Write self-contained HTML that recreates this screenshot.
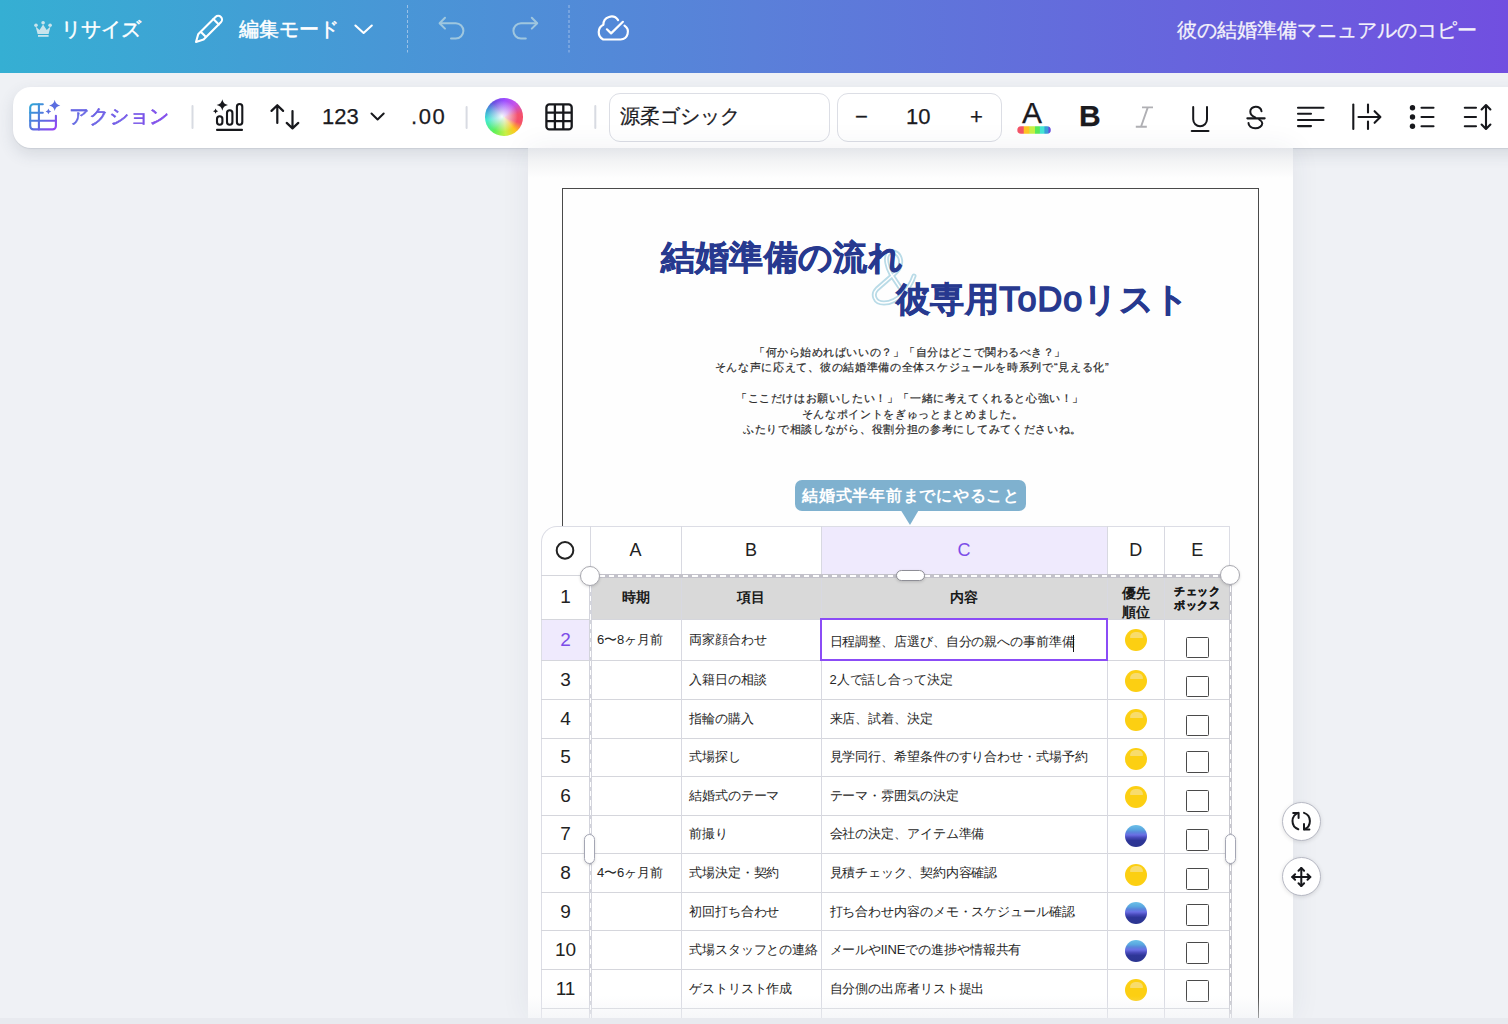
<!DOCTYPE html>
<html><head><meta charset="utf-8">
<style>
*{box-sizing:border-box;margin:0;padding:0}
html,body{width:1508px;height:1024px;overflow:hidden;background:#eff1f5;font-family:"Liberation Sans",sans-serif;color:#1a1a1a}
.a{position:absolute}
svg{position:absolute;overflow:visible}
#topbar{left:0;top:0;width:1508px;height:73px;background:linear-gradient(90deg,#35afd3 0%,#5a80d9 50%,#714fe0 100%)}
.tw{color:#fff;font-size:20px;line-height:20px;white-space:nowrap;-webkit-text-stroke:0.45px #fff}
#toolbar{left:13px;top:87px;width:1520px;height:61px;background:#fff;border-radius:18px;box-shadow:0 1px 1px rgba(60,70,90,.10),0 6px 16px rgba(60,70,90,.14)}
.tb{font-size:22px;line-height:22px;white-space:nowrap;color:#1b1b1f;-webkit-text-stroke:0.25px #1b1b1f}
.sep{width:2px;background:#d8dbe2;border-radius:1px}
#page{left:528px;top:148px;width:765px;height:870px;background:#fefefe;box-shadow:0 0 28px rgba(40,50,80,.07)}
#bottombar{left:0;top:1018px;width:1508px;height:6px;background:#e8eaef}
.bt{left:562px;width:696px;text-align:center;font-size:11px;line-height:16px;color:#2a2a2a;white-space:nowrap;-webkit-text-stroke:0.2px #2a2a2a}
.cell{position:absolute;font-size:13px;line-height:14px;letter-spacing:-0.1px;white-space:nowrap;color:#262626}
.rh{position:absolute;left:541px;width:49px;text-align:center;font-size:19px;color:#222}
.hl{position:absolute;height:1px;background:#d5d6dc}
.vl{position:absolute;width:1px;background:#d8d9e1}
.chk{position:absolute;width:22.5px;height:21.8px;border:1.8px solid #4a4a4a;border-radius:1.5px;background:#fff}
.dot{position:absolute;width:22px;height:22px;border-radius:50%}
.y{background:#fccf12}
.y::after{content:"";position:absolute;left:4.5px;top:2.5px;width:13px;height:6px;border-radius:6.5px 6.5px 1px 1px;background:#f8dc6c}
.b{background:linear-gradient(180deg,#6cc0e8 0%,#5aa8e0 20%,#5a86dc 32%,#6a6ee4 45%,#4648b8 58%,#2e3698 70%,#2b3590 100%)}
</style></head><body>
<div id="topbar" class="a"></div>

<!-- top bar content -->
<svg style="left:0;top:0" width="1508" height="73">
 <g fill="#c9e4ec">
  <circle cx="36" cy="25.3" r="1.8"/><circle cx="43.1" cy="22.8" r="1.8"/><circle cx="50.1" cy="25.3" r="1.8"/>
  <path d="M35.6 26.5 L39.5 30 L43.1 24.5 L46.7 30 L50.5 26.5 L48.6 34 L37.6 34 Z"/>
  <rect x="38" y="35" width="10.6" height="1.8"/>
 </g>
 <g fill="none" stroke="#fff" stroke-width="2.1" stroke-linecap="round" stroke-linejoin="round">
  <path d="M196 42 L198.2 34.2 L215.5 16.9 A3.3 3.3 0 0 1 220.9 22.3 L203.6 39.6 Z"/>
  <path d="M213.4 19 L218.8 24.4"/>
  <path d="M201.7 32.7 L205 36"/>
  <path d="M355.4 25.5 L363.6 33 L371.8 25.5"/>
 </g>
 <path d="M407.5 5 V52.5" stroke="rgba(220,230,245,.55)" stroke-width="1" stroke-dasharray="3 2"/>
 <path d="M569 5 V52.5" stroke="rgba(220,230,245,.55)" stroke-width="1" stroke-dasharray="3 2"/>
 <g fill="none" stroke="#a8cde0" stroke-width="2" stroke-linecap="round" stroke-linejoin="round" opacity=".9">
  <path d="M445 17.8 L439.6 23.2 L445 28.6"/>
  <path d="M440 23.2 H455.8 A7.6 7.6 0 0 1 455.8 38.4 H451"/>
  <path d="M531.8 17.8 L537.2 23.2 L531.8 28.6"/>
  <path d="M536.8 23.2 H521 A7.6 7.6 0 0 0 521 38.4 H525.8"/>
 </g>
 <g fill="none" stroke="#fff" stroke-width="2.2" stroke-linecap="round" stroke-linejoin="round">
  <path d="M618.1 20.2 A8 8 0 0 0 603.4 24.8 A8.2 8.2 0 0 0 603.2 39.5 H620.6 A7.6 7.6 0 0 0 624.5 25.6"/>
  <path d="M606.9 29.3 L611.1 33.4 L622.9 21.8"/>
 </g>
</svg>
<div class="a tw" style="left:61px;top:19px">リサイズ</div>
<div class="a tw" style="left:239px;top:19px">編集モード</div>
<div class="a tw" style="left:1177px;top:19.5px;font-size:20px;line-height:21px;color:#f4f2fb;-webkit-text-stroke:0.3px #f4f2fb">彼の結婚準備マニュアルのコピー</div>
<div id="toolbar" class="a"></div>
<!-- toolbar content -->
<svg style="left:0;top:0" width="1508" height="160">
 <defs>
  <linearGradient id="ag" x1="0" y1="0" x2="1" y2="1">
   <stop offset="0" stop-color="#2fa6d6"/><stop offset=".55" stop-color="#5a6ee0"/><stop offset="1" stop-color="#9a3ff5"/>
  </linearGradient>
  <linearGradient id="tg" x1="0" y1="0" x2="1" y2="0">
   <stop offset="0" stop-color="#5a6fe0"/><stop offset="1" stop-color="#8d45ee"/>
  </linearGradient>
  <linearGradient id="rb" x1="0" y1="0" x2="1" y2="0">
   <stop offset="0" stop-color="#f45468"/><stop offset=".18" stop-color="#f45468"/>
   <stop offset=".2" stop-color="#ffc524"/><stop offset=".35" stop-color="#ffc524"/>
   <stop offset=".37" stop-color="#c6f044"/><stop offset=".52" stop-color="#c6f044"/>
   <stop offset=".54" stop-color="#58ea5a"/><stop offset=".66" stop-color="#58ea5a"/>
   <stop offset=".68" stop-color="#45e6d4"/><stop offset=".8" stop-color="#45e6d4"/>
   <stop offset=".82" stop-color="#3aa0da"/><stop offset=".92" stop-color="#3aa0da"/>
   <stop offset=".94" stop-color="#6a4ee0"/><stop offset="1" stop-color="#6a4ee0"/>
  </linearGradient>
 </defs>
 <!-- action icon -->
 <g fill="none" stroke="url(#ag)" stroke-width="2.1" stroke-linecap="round" stroke-linejoin="round">
  <path d="M42.8 104.2 H33.5 A3.3 3.3 0 0 0 30.2 107.5 V126.1 A3.3 3.3 0 0 0 33.5 129.4 H52.6 A3.3 3.3 0 0 0 55.9 126.1 V115.8"/>
  <path d="M38.9 104.2 V129.4 M30.2 112.8 H42.8 M30.2 120.8 H55.9"/>
 </g>
 <path fill="#5b6ee0" d="M54.7 99.8 Q55.5 104.6 60.3 105.4 Q55.5 106.2 54.7 111 Q53.9 106.2 49.1 105.4 Q53.9 104.6 54.7 99.8 Z"/>
 <path fill="#5b6ee0" d="M48.4 108.6 Q48.8 111 51.2 111.4 Q48.8 111.8 48.4 114.2 Q48 111.8 45.6 111.4 Q48 111 48.4 108.6 Z"/>
 <rect x="191.5" y="105" width="2" height="24" rx="1" fill="#d8dbe2"/>
 <!-- chart icon -->
 <g fill="none" stroke="#17181c" stroke-width="2.1">
  <rect x="217" y="116.2" width="5.4" height="8.6" rx="2.7"/>
  <rect x="227" y="110.3" width="5.4" height="14.5" rx="2.7"/>
  <rect x="236.9" y="104" width="5.4" height="20.8" rx="2.7"/>
 </g>
 <rect x="216" y="128.8" width="27" height="2.1" rx="1" fill="#17181c"/>
 <path fill="#17181c" d="M222.3 99.3 Q223.1 104.2 228 105 Q223.1 105.8 222.3 110.7 Q221.5 105.8 216.6 105 Q221.5 104.2 222.3 99.3 Z"/>
 <path fill="#17181c" d="M215.6 108.6 Q216 110.8 218.2 111.2 Q216 111.6 215.6 113.8 Q215.2 111.6 213 111.2 Q215.2 110.8 215.6 108.6 Z"/>
 <!-- sort arrows -->
 <g fill="none" stroke="#17181c" stroke-width="2.2" stroke-linecap="round" stroke-linejoin="round">
  <path d="M277.3 105.5 V123 M271.5 110.9 L277.3 105.2 L283.1 110.9"/>
  <path d="M292.5 111 V128 M286.7 122.9 L292.5 128.4 L298.3 122.9"/>
  <path d="M371.5 113.5 L377.6 119.5 L383.7 113.5" stroke-width="2"/>
 </g>
 <rect x="465.6" y="106" width="2" height="23" rx="1" fill="#d8dbe2"/>
 <!-- grid icon -->
 <g fill="none" stroke="#17181c" stroke-width="2.3">
  <rect x="546.4" y="104.4" width="25.3" height="25" rx="3"/>
  <path d="M554.9 104.4 V129.4 M563.3 104.4 V129.4 M546.4 112.7 H571.7 M546.4 121.1 H571.7"/>
 </g>
 <rect x="594.3" y="105" width="2" height="24" rx="1" fill="#d8dbe2"/>
 <!-- rainbow bar -->
 <rect x="1017.3" y="126.2" width="33.5" height="7.6" rx="3.8" fill="url(#rb)"/>
 <!-- italic -->
 <g fill="none" stroke="#b0b0b4" stroke-width="1.9" stroke-linecap="butt">
  <path d="M1142 107.4 H1153 M1135.8 126.8 H1146.8 M1147.8 107.4 L1141 126.8"/>
 </g>
 <!-- underline U -->
 <g fill="none" stroke="#17181c" stroke-width="2" stroke-linecap="round">
  <path d="M1193.2 107 V119.3 A6.9 6.9 0 0 0 1207 119.3 V107"/>
  <path d="M1191.8 131 H1208.4" stroke-width="2.2"/>
 </g>
 <!-- S strike -->
 <g fill="none" stroke="#17181c" stroke-width="2" stroke-linecap="round">
  <path d="M1261.5 111.2 A5.6 4.8 0 0 0 1250.3 111.8 Q1250.3 115.5 1255.2 117.5"/>
  <path d="M1259.2 119.5 Q1262.3 121.5 1262.3 123.3 A6.5 4.9 0 0 1 1248.5 123"/>
  <path d="M1247.4 118.3 H1264.6" stroke-width="2.2"/>
 </g>
 <!-- align left -->
 <g fill="none" stroke="#17181c" stroke-width="2.1" stroke-linecap="round">
  <path d="M1298 107.7 H1323.5 M1298 113.8 H1311 M1298 120 H1323.5 M1298 126.1 H1311"/>
 </g>
 <!-- indent -->
 <g fill="none" stroke="#17181c" stroke-width="2.1" stroke-linecap="round" stroke-linejoin="round">
  <path d="M1353.3 104.5 V129"/>
  <path d="M1368 104.5 V112.5 M1368 121.5 V129"/>
  <path d="M1358.5 117 H1380 M1374.6 111.2 L1380.4 117 L1374.6 122.8"/>
 </g>
 <!-- list -->
 <g fill="#17181c">
  <circle cx="1412.5" cy="107.8" r="2.7"/><circle cx="1412.5" cy="117" r="2.7"/><circle cx="1412.5" cy="126.2" r="2.7"/>
 </g>
 <g fill="none" stroke="#17181c" stroke-width="2.1" stroke-linecap="round">
  <path d="M1421.5 107.8 H1433.5 M1421.5 117 H1433.5 M1421.5 126.2 H1433.5"/>
  <path d="M1464.8 107.8 H1476 M1464.8 117 H1476 M1464.8 126.2 H1476"/>
  <path d="M1486 105.5 V128.5 M1481.6 109.5 L1486 105 L1490.4 109.5 M1481.6 124.5 L1486 129 L1490.4 124.5" stroke-linejoin="round"/>
 </g>
</svg>
<div class="a" style="left:485px;top:98px;width:37.5px;height:37.5px;border-radius:50%;background:conic-gradient(from 0deg,#9b4cff 0deg,#c455e8 40deg,#f4516c 80deg,#f5506a 110deg,#ffc61e 140deg,#c5f046 175deg,#5ef05a 215deg,#42e9d0 260deg,#3f9cd8 295deg,#6a4ee0 325deg,#9b4cff 360deg)"></div>
<div class="a" style="left:485px;top:98px;width:37.5px;height:37.5px;border-radius:50%;background:radial-gradient(circle at 45% 48%,rgba(255,255,255,.95) 0,rgba(240,240,250,.7) 18%,rgba(255,255,255,0) 55%)"></div>
<div class="a" style="left:69px;top:105px;font-size:20px;line-height:22px;white-space:nowrap;background:linear-gradient(90deg,#5a6fe0,#8d45ee);-webkit-background-clip:text;color:transparent;-webkit-text-stroke:0.45px rgba(112,92,232,.75)">アクション</div>
<div class="a tb" style="left:322px;top:106px">123</div>
<div class="a tb" style="left:411px;top:106px;letter-spacing:1.6px">.00</div>
<div class="a" style="left:608.5px;top:93px;width:221.5px;height:48.5px;border:1.5px solid #dcdee5;border-radius:11px"></div>
<div class="a tb" style="left:620px;top:105px;font-size:20px">源柔ゴシック</div>
<div class="a" style="left:837px;top:93px;width:165px;height:48.5px;border:1.5px solid #dcdee5;border-radius:11px"></div>
<div class="a tb" style="left:855px;top:106px">−</div>
<div class="a tb" style="left:906px;top:106px">10</div>
<div class="a tb" style="left:970px;top:106px">+</div>
<div class="a tb" style="left:1022px;top:98px;font-size:30px;line-height:30px">A</div>
<div class="a tb" style="left:1079px;top:101px;font-size:30px;line-height:30px;font-weight:bold">B</div>

<div id="page" class="a"></div>

<!-- page content -->
<div class="a" style="left:528px;top:148px;width:765px;height:30px;background:linear-gradient(180deg,#e4e6ea 0%,#f3f4f5 45%,rgba(254,254,254,0) 100%)"></div>
<div class="a" style="left:562px;top:188px;width:696.5px;height:840px;border:1.6px solid #4a4a4a;border-bottom:none"></div>
<svg style="left:0;top:0" width="1508" height="1024">
 <defs><path id="amp" d="M914 276 C910 288 898 303 884 303 C874 303 872 294 877 289 L893 275 C899 270 902 264 900 258 C898 252 891 250 888 254 C885 258 887 267 891 274 L903 292"/></defs>
 <use href="#amp" stroke="#b9dbe7" stroke-width="5" fill="none" stroke-linecap="round" stroke-linejoin="round"/>
 <use href="#amp" stroke="#ffffff" stroke-width="1.4" fill="none" stroke-linecap="round" stroke-linejoin="round"/>
</svg>
<div class="a" style="left:660.5px;top:237px;font-size:34px;letter-spacing:0.4px;line-height:40px;font-weight:bold;color:#27398f;-webkit-text-stroke:0.7px #27398f;white-space:nowrap">結婚準備の流れ</div>

<div class="a" style="left:896px;top:279px;font-size:34.2px;letter-spacing:0.45px;line-height:40px;font-weight:bold;color:#27398f;-webkit-text-stroke:0.7px #27398f;white-space:nowrap">彼専用<span style="font-weight:normal;-webkit-text-stroke:1.5px #27398f;letter-spacing:1px">ToDo</span>リスト</div>
<div class="a bt" style="margin-left:0px;top:344.4px;letter-spacing:0.55px">「何から始めればいいの？」「自分はどこで関わるべき？」</div>
<div class="a bt" style="margin-left:2px;top:359.4px;letter-spacing:0.7px">そんな声に応えて、彼の結婚準備の全体スケジュールを時系列で“見える化”</div>
<div class="a bt" style="margin-left:0px;top:389.5px;letter-spacing:0.6px">「ここだけはお願いしたい！」「一緒に考えてくれると心強い！」</div>
<div class="a bt" style="margin-left:2.5px;top:405.7px;letter-spacing:0.65px">そんなポイントをぎゅっとまとめました。</div>
<div class="a bt" style="margin-left:2.5px;top:421.3px;letter-spacing:0.7px">ふたりで相談しながら、役割分担の参考にしてみてくださいね。</div>

<div class="a" style="left:795px;top:480px;width:230.5px;height:30.5px;background:#7fb1cf;border-radius:7px"></div>
<svg style="left:0;top:0" width="1508" height="1024"><path d="M900.7 510 L918.8 510 L910 525 Z" fill="#7fb1cf"/></svg>
<div class="a" style="left:802px;top:484.5px;font-size:16px;letter-spacing:0.75px;line-height:22px;font-weight:bold;color:#fff;white-space:nowrap">結婚式半年前までにやること</div>
<!--SHEET-->
<div class="a" style="left:0;top:0;width:1508px;height:1018px;overflow:hidden">
<div class="a" style="left:541px;top:526px;width:689px;height:600px;background:#fff;border-top-left-radius:16px;border:1px solid #dcdde5;border-bottom:none"></div>
<div class="a" style="left:821.5px;top:527px;width:285.5px;height:48px;background:#efeafd"></div>
<div class="a" style="left:542px;top:619.5px;width:48px;height:41.0px;background:#efeafd"></div>
<div class="a" style="left:592px;top:575px;width:636.5px;height:44.5px;background:#d9d9d9"></div>
<div class="hl" style="left:541px;top:574.5px;width:49px"></div>
<div class="hl" style="left:541px;top:619.0px;width:689px"></div>
<div class="hl" style="left:541px;top:660.0px;width:689px"></div>
<div class="hl" style="left:541px;top:698.8px;width:689px"></div>
<div class="hl" style="left:541px;top:737.5px;width:689px"></div>
<div class="hl" style="left:541px;top:776.1px;width:689px"></div>
<div class="hl" style="left:541px;top:814.5px;width:689px"></div>
<div class="hl" style="left:541px;top:853.3px;width:689px"></div>
<div class="hl" style="left:541px;top:892.0px;width:689px"></div>
<div class="hl" style="left:541px;top:930.2px;width:689px"></div>
<div class="hl" style="left:541px;top:969.0px;width:689px"></div>
<div class="hl" style="left:541px;top:1007.8px;width:689px"></div>
<div class="hl" style="left:541px;top:1046.5px;width:689px"></div>
<div class="vl" style="left:680.5px;top:526px;height:500px"></div>
<div class="vl" style="left:820.5px;top:526px;height:500px"></div>
<div class="vl" style="left:1106.5px;top:526px;height:500px"></div>
<div class="vl" style="left:1164.0px;top:526px;height:500px"></div>
<div class="vl" style="left:589.5px;top:526px;height:49px"></div>
<div class="a" style="left:590px;top:574.4px;width:640px;height:3.2px;background:#c3c2ca"><div class="a" style="left:0;top:0.7px;width:100%;height:1.8px;background:repeating-linear-gradient(90deg,#fff 0 5.3px,transparent 5.3px 9.3px)"></div></div>
<div class="a" style="left:589px;top:577px;width:3px;height:500px;background:#d3d4dc"><div class="a" style="left:1px;top:0;width:1px;height:100%;background:repeating-linear-gradient(180deg,#fff 0 5.3px,transparent 5.3px 9.3px)"></div></div>
<div class="a" style="left:1229px;top:577px;width:3px;height:500px;background:#c9c9d0"><div class="a" style="left:1px;top:0;width:1px;height:100%;background:repeating-linear-gradient(180deg,#fff 0 5.3px,transparent 5.3px 9.3px)"></div></div>
<svg style="left:0;top:0" width="1508" height="1024"><circle cx="565" cy="550.4" r="8.3" fill="none" stroke="#222" stroke-width="2"/></svg>
<div class="a" style="left:615.5px;top:540px;width:40px;text-align:center;font-size:18px;line-height:20px;color:#222">A</div>
<div class="a" style="left:731.0px;top:540px;width:40px;text-align:center;font-size:18px;line-height:20px;color:#222">B</div>
<div class="a" style="left:944.0px;top:540px;width:40px;text-align:center;font-size:18px;line-height:20px;color:#7c4de8">C</div>
<div class="a" style="left:1115.75px;top:540px;width:40px;text-align:center;font-size:18px;line-height:20px;color:#222">D</div>
<div class="a" style="left:1177.25px;top:540px;width:40px;text-align:center;font-size:18px;line-height:20px;color:#222">E</div>
<div class="rh" style="top:586.25px;line-height:22px;color:#222">1</div>
<div class="rh" style="top:629.0px;line-height:22px;color:#7c4de8">2</div>
<div class="rh" style="top:668.9px;line-height:22px;color:#222">3</div>
<div class="rh" style="top:707.65px;line-height:22px;color:#222">4</div>
<div class="rh" style="top:746.3px;line-height:22px;color:#222">5</div>
<div class="rh" style="top:784.8px;line-height:22px;color:#222">6</div>
<div class="rh" style="top:823.4px;line-height:22px;color:#222">7</div>
<div class="rh" style="top:862.15px;line-height:22px;color:#222">8</div>
<div class="rh" style="top:900.6px;line-height:22px;color:#222">9</div>
<div class="rh" style="top:939.1px;line-height:22px;color:#222">10</div>
<div class="rh" style="top:977.9px;line-height:22px;color:#222">11</div>
<div class="a" style="left:575.5px;top:588.25px;width:120px;text-align:center;font-size:14px;line-height:18px;font-weight:bold;color:#1a1a1a">時期</div>
<div class="a" style="left:691.0px;top:588.25px;width:120px;text-align:center;font-size:14px;line-height:18px;font-weight:bold;color:#1a1a1a">項目</div>
<div class="a" style="left:904.0px;top:588.25px;width:120px;text-align:center;font-size:14px;line-height:18px;font-weight:bold;color:#1a1a1a">内容</div>
<div class="a" style="left:1107px;top:584px;width:57.5px;height:35px;overflow:hidden;text-align:center;font-size:14px;line-height:18.5px;font-weight:bold;color:#1a1a1a">優先<br>順位</div>
<div class="a" style="left:1164.5px;top:583.5px;width:65.5px;text-align:center;font-size:11px;letter-spacing:0.4px;line-height:14.5px;font-weight:bold;color:#1a1a1a;-webkit-text-stroke:0.35px #1a1a1a">チェック<br>ボックス</div>
<div class="cell" style="left:597px;top:633.0px">6〜8ヶ月前</div>
<div class="cell" style="left:689px;top:633.0px">両家顔合わせ</div>
<div class="cell" style="left:829.5px;top:634.5px">日程調整、店選び、自分の親への事前準備</div>
<div class="dot y" style="left:1125px;top:629.2px"></div>
<div class="chk" style="left:1186.2px;top:636.6px"></div>
<div class="cell" style="left:689px;top:672.9px">入籍日の相談</div>
<div class="cell" style="left:829.5px;top:672.9px">2人で話し合って決定</div>
<div class="dot y" style="left:1125px;top:670.2px"></div>
<div class="chk" style="left:1186.2px;top:675.7px"></div>
<div class="cell" style="left:689px;top:711.65px">指輪の購入</div>
<div class="cell" style="left:829.5px;top:711.65px">来店、試着、決定</div>
<div class="dot y" style="left:1125px;top:709.0px"></div>
<div class="chk" style="left:1186.2px;top:714.7px"></div>
<div class="cell" style="left:689px;top:750.3px">式場探し</div>
<div class="cell" style="left:829.5px;top:750.3px">見学同行、希望条件のすり合わせ・式場予約</div>
<div class="dot y" style="left:1125px;top:747.7px"></div>
<div class="chk" style="left:1186.2px;top:750.9px"></div>
<div class="cell" style="left:689px;top:788.8px">結婚式のテーマ</div>
<div class="cell" style="left:829.5px;top:788.8px">テーマ・雰囲気の決定</div>
<div class="dot y" style="left:1125px;top:786.3px"></div>
<div class="chk" style="left:1186.2px;top:789.9px"></div>
<div class="cell" style="left:689px;top:827.4px">前撮り</div>
<div class="cell" style="left:829.5px;top:827.4px">会社の決定、アイテム準備</div>
<div class="dot b" style="left:1125px;top:824.7px"></div>
<div class="chk" style="left:1186.2px;top:828.9px"></div>
<div class="cell" style="left:597px;top:866.15px">4〜6ヶ月前</div>
<div class="cell" style="left:689px;top:866.15px">式場決定・契約</div>
<div class="cell" style="left:829.5px;top:866.15px">見積チェック、契約内容確認</div>
<div class="dot y" style="left:1125px;top:863.5px"></div>
<div class="chk" style="left:1186.2px;top:868px"></div>
<div class="cell" style="left:689px;top:904.6px">初回打ち合わせ</div>
<div class="cell" style="left:829.5px;top:904.6px">打ち合わせ内容のメモ・スケジュール確認</div>
<div class="dot b" style="left:1125px;top:902.2px"></div>
<div class="chk" style="left:1186.2px;top:904.1px"></div>
<div class="cell" style="left:689px;top:943.1px">式場スタッフとの連絡</div>
<div class="cell" style="left:829.5px;top:943.1px">メールやlINEでの進捗や情報共有</div>
<div class="dot b" style="left:1125px;top:940.4px"></div>
<div class="chk" style="left:1186.2px;top:941.8px"></div>
<div class="cell" style="left:689px;top:981.9px">ゲストリスト作成</div>
<div class="cell" style="left:829.5px;top:981.9px">自分側の出席者リスト提出</div>
<div class="dot y" style="left:1125px;top:979.2px"></div>
<div class="chk" style="left:1186.2px;top:980.3px"></div>
<div class="a" style="left:820px;top:618.0px;width:288px;height:43.0px;border:2.5px solid #8b4cf6"></div>
<div class="a" style="left:1073.2px;top:634.5px;width:1.2px;height:17px;background:#111"></div>
<div class="a" style="left:579.5px;top:565.5px;width:20px;height:20px;border-radius:50%;background:#fff;border:1.5px solid #a9a9b0;box-shadow:0 1px 3px rgba(0,0,0,.15)"></div>
<div class="a" style="left:1220px;top:564.6px;width:20px;height:20px;border-radius:50%;background:#fff;border:1.5px solid #a9a9b0;box-shadow:0 1px 3px rgba(0,0,0,.15)"></div>
<div class="a" style="left:895.5px;top:569.5px;width:29px;height:11px;border-radius:6px;background:#fff;border:1.5px solid #8e8e96;box-shadow:0 1px 3px rgba(0,0,0,.15)"></div>
<div class="a" style="left:584px;top:834px;width:11px;height:30px;border-radius:6px;background:#fff;border:1.5px solid #a4a6b4;box-shadow:0 1px 3px rgba(0,0,0,.15)"></div>
<div class="a" style="left:1225px;top:834px;width:11px;height:30px;border-radius:6px;background:#fff;border:1.5px solid #a4a6b4;box-shadow:0 1px 3px rgba(0,0,0,.15)"></div>
</div>
<div class="a" style="left:1282px;top:801.7px;width:39px;height:39px;border-radius:50%;background:#fff;border:1.2px solid #b7b9c4;box-shadow:0 1px 4px rgba(0,0,0,.12)"></div>
<div class="a" style="left:1282px;top:857.3px;width:39px;height:39px;border-radius:50%;background:#fff;border:1.2px solid #b7b9c4;box-shadow:0 1px 4px rgba(0,0,0,.12)"></div>
<svg style="left:0;top:0" width="1508" height="1024"><g fill="none" stroke="#17181c" stroke-width="2" stroke-linecap="round" stroke-linejoin="round">
 <path d="M1298.3 829.3 A8.7 8.7 0 0 1 1298.3 812.9"/><path d="M1293.2 812.9 H1298.6 V818"/>
 <path d="M1304 812.9 A8.7 8.7 0 0 1 1304.2 829.3"/><path d="M1304 824 V829.4 H1309.4"/>
 <path d="M1301.3 868 V886 M1292.3 877 H1310.3"/>
 <path d="M1298.5 870.8 L1301.3 868 L1304.1 870.8 M1298.5 883.2 L1301.3 886 L1304.1 883.2 M1295.1 874.2 L1292.3 877 L1295.1 879.8 M1307.5 874.2 L1310.3 877 L1307.5 879.8"/>
</g></svg>
<!--/SHEET-->
<div class="a" style="left:528px;top:996px;width:765px;height:22px;background:linear-gradient(180deg,rgba(238,240,244,0),rgba(238,240,244,.55))"></div>
<div id="bottombar" class="a"></div>
</body></html>
